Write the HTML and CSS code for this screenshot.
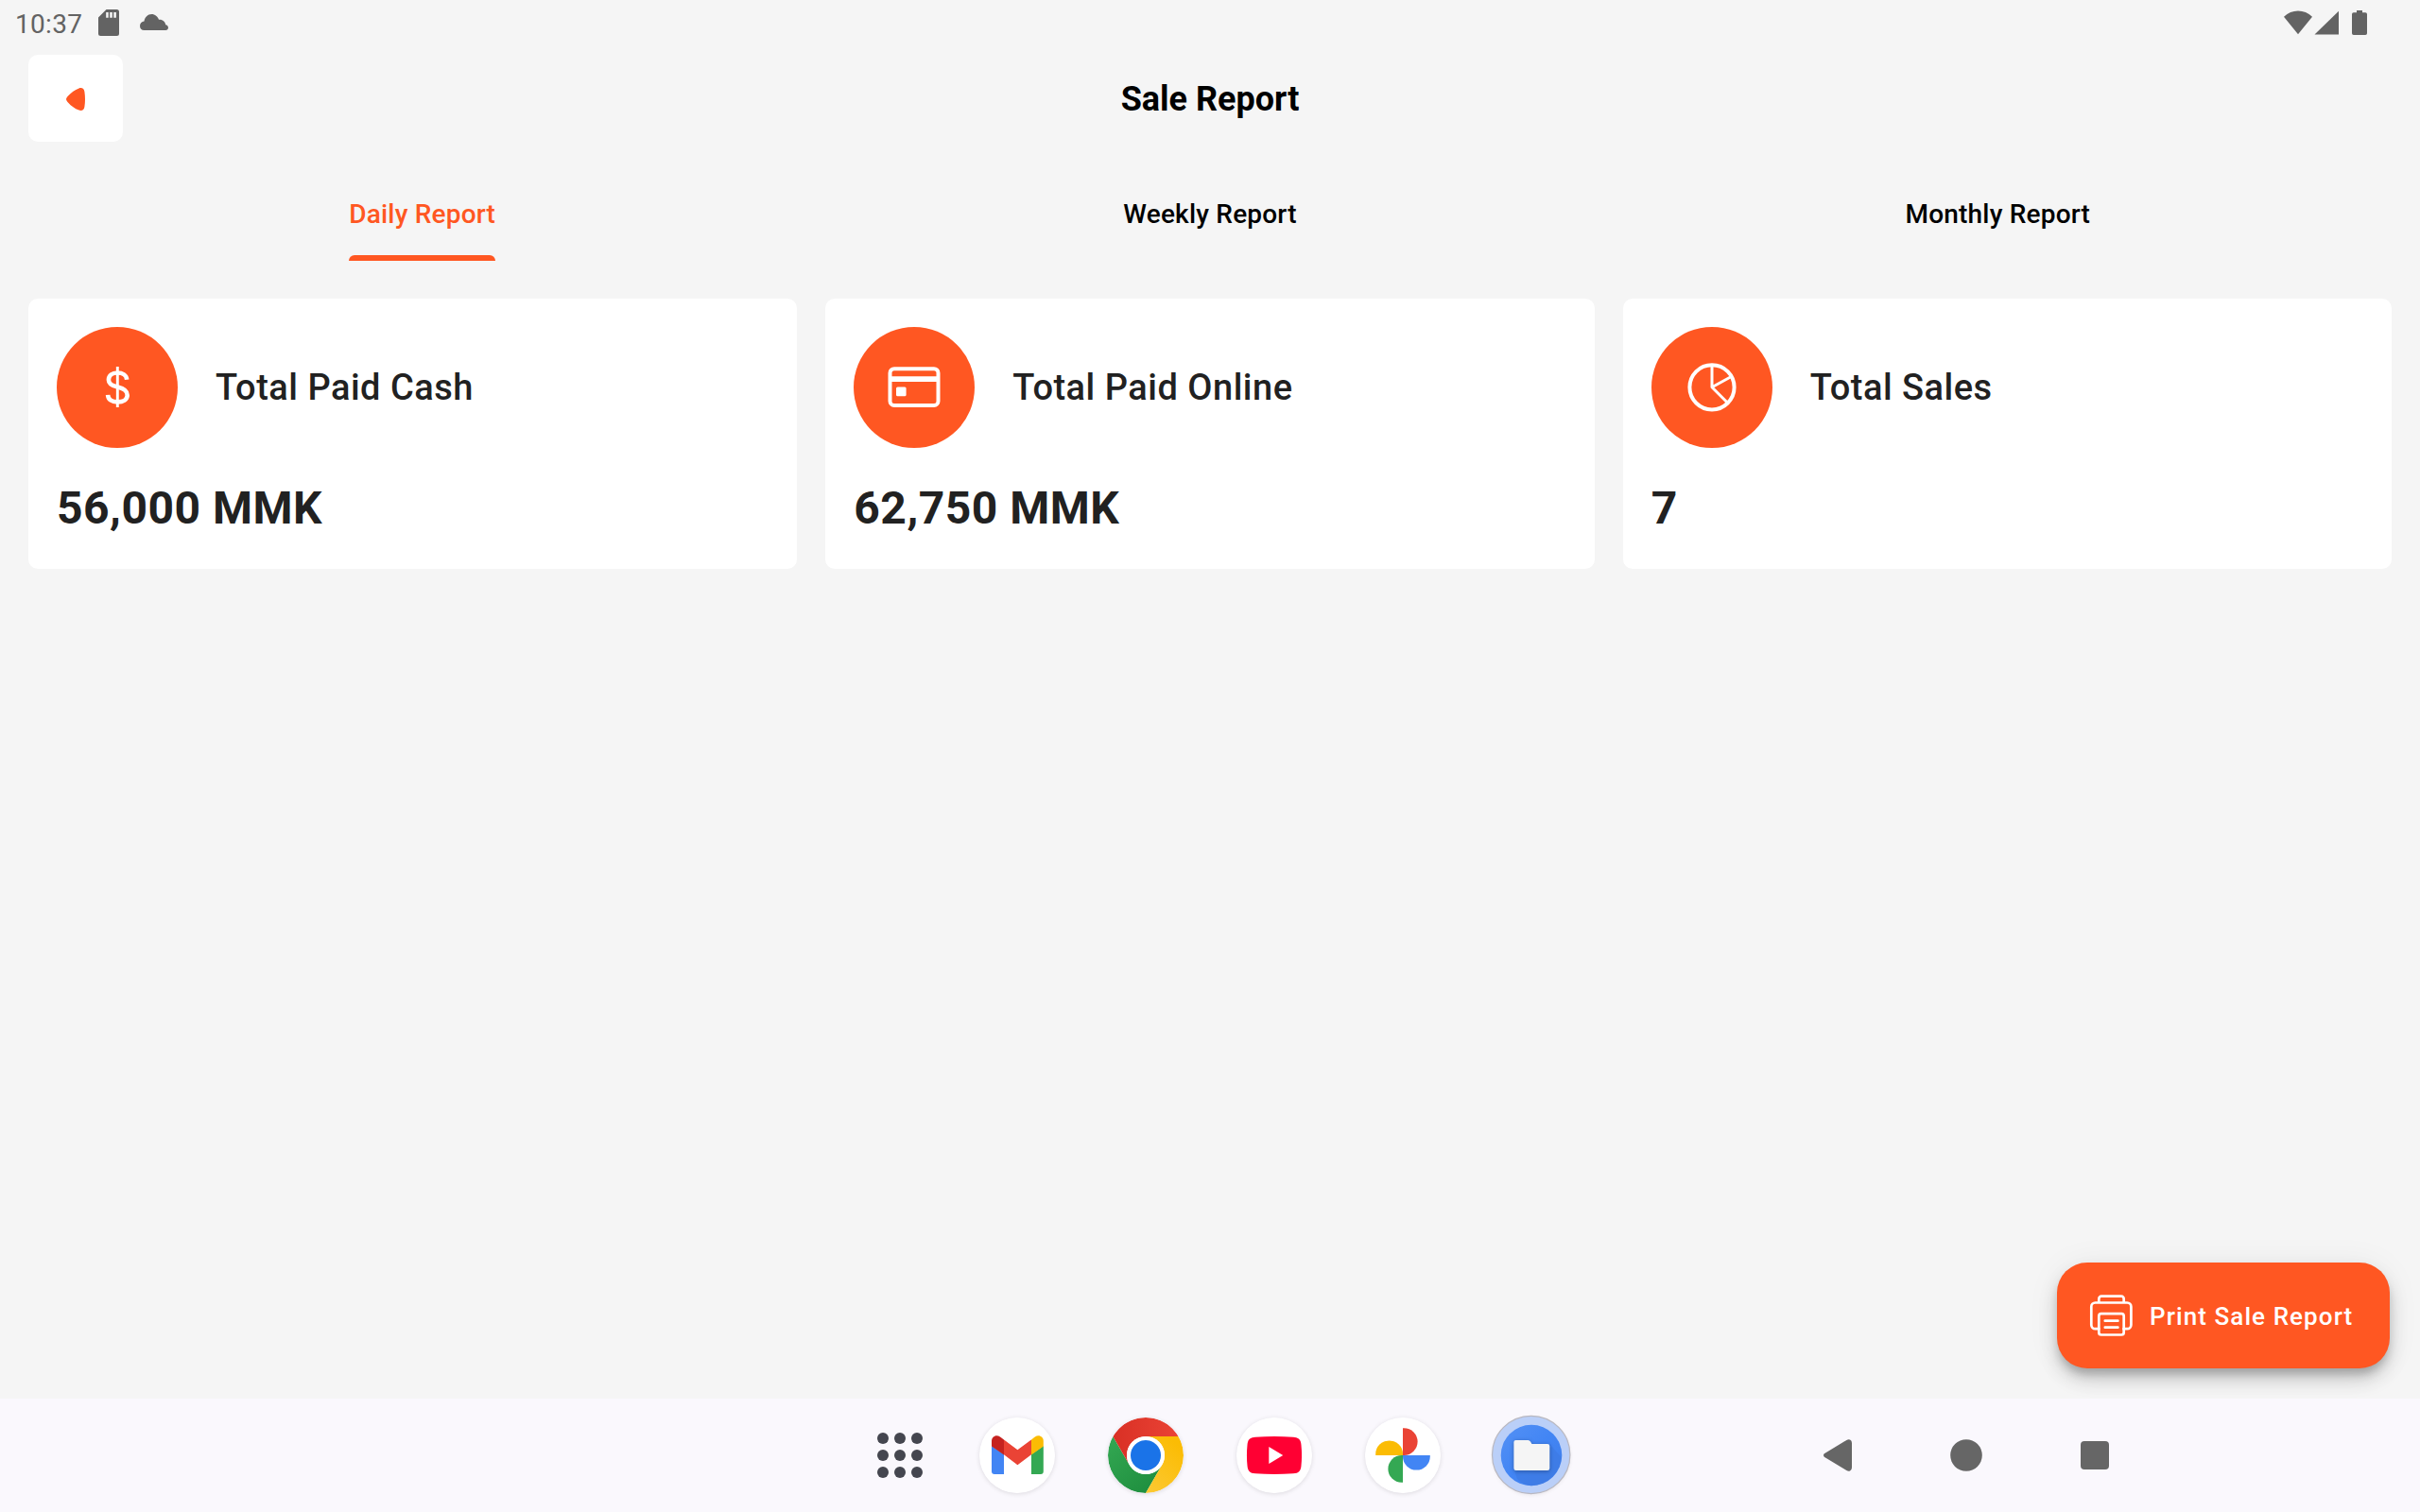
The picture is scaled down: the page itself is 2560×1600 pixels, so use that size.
FILE: index.html
```html
<!DOCTYPE html>
<html lang="en">
<head>
<meta charset="utf-8">
<title>Sale Report</title>
<link rel="stylesheet" href="styles.css">
</head>
<body>
<div class="screen">
  <div class="statusbar">
    <span class="clock">10:37</span>
    <svg class="sd" width="22" height="28" viewBox="0 0 22 28"><path fill="#636363" fill-rule="evenodd" d="M8.5 0H19.5A2.5 2.5 0 0 1 22 2.500V25.500A2.500 2.500 0 0 1 19.500 28H2.500A2.500 2.500 0 0 1 0 25.500V8.500ZM8.200 3V8.700H10.700V3ZM12.200 3V8.700H14.800V3ZM16.300 3V8.700H18.900V3Z"/></svg>
    <svg class="cloud" width="30" height="17" viewBox="0 0 30 17"><path fill="#636363" d="M4.500 17A4.700 4.700 0 0 1 0 12.500C0 9.800 2 7.800 4.500 7.500C5.200 3.200 8.300 0 12.300 0C16 0 18.800 2.500 20 5.700C24 5.300 27 8 27.200 11.200C28.800 11.500 30 12.600 30 14.200C30 15.800 28.800 17 27.200 17Z"/></svg>
    <svg class="signals" width="88" height="26" viewBox="0 0 88 26"><g fill="#636363"><path d="M0 6.800Q6.500 .5 15 .5T30 6.800L15 25.300Z"/><path d="M58 .8V25.500H32.500Z"/><path d="M77 0H83V2.300H86.200Q88 2.300 88 4.100V24.200Q88 26 86.200 26H73.800Q72 26 72 24.200V4.100Q72 2.300 73.800 2.300H77Z"/></g></svg>
  </div>

  <header class="header">
    <button class="back" aria-label="Back"><svg width="20" height="24" viewBox="0 0 20 24"><path fill="#ff5722" d="M2 8.500C5.500 4.500 9 2.200 13.500 .4C16.500-.7 19 .7 19.400 4C20.200 9.500 20.200 14.500 19.400 20C19 23.300 16.500 24.700 13.500 23.600C9 21.800 5.500 19.500 2 15.500C-.6 12.600-.6 11.400 2 8.500Z"/></svg></button>
    <h1 class="title">Sale Report</h1>
    <span class="header-end"></span>
  </header>

  <nav class="tabs">
    <a class="tab tab-active"><span class="tab-label">Daily Report</span></a>
    <a class="tab"><span class="tab-label">Weekly Report</span></a>
    <a class="tab"><span class="tab-label">Monthly Report</span></a>
  </nav>

  <main class="cards">
    <section class="card">
      <div class="card-head">
        <svg class="badge" viewBox="0 0 128 128"><circle cx="64" cy="64" r="64" fill="#ff5722"/><g fill="none" stroke="#fff"><path stroke-width="4.600" d="M74.200 55.700C73.800 51 69.600 48.500 64.300 48.500C58.500 48.500 54.900 51.500 54.900 56C54.900 61 59.500 62.500 64.500 63.600C70.300 65 74.700 67 74.700 72.200C74.700 76.800 70.300 79.400 64.300 79.400C58.200 79.400 54.300 76.700 54.100 71.800"/><path stroke-width="2.900" d="M64.300 42V85"/></g></svg>
        <span class="card-title">Total Paid Cash</span>
      </div>
      <div class="card-value">56,000 MMK</div>
    </section>
    <section class="card">
      <div class="card-head">
        <svg class="badge" viewBox="0 0 128 128"><circle cx="64" cy="64" r="64" fill="#ff5722"/><rect x="38.500" y="44.200" width="51" height="38.800" rx="4.500" fill="none" stroke="#fff" stroke-width="4"/><path fill="#fff" d="M38 52.200H90V58H38Z"/><rect x="45" y="63.500" width="10.600" height="9.700" rx="1.500" fill="#fff"/></svg>
        <span class="card-title">Total Paid Online</span>
      </div>
      <div class="card-value">62,750 MMK</div>
    </section>
    <section class="card">
      <div class="card-head">
        <svg class="badge" viewBox="0 0 128 128"><circle cx="64" cy="64" r="64" fill="#ff5722"/><g fill="none" stroke="#fff"><circle cx="64" cy="63.800" r="23.600" stroke-width="4"/><path stroke-width="3" stroke-linejoin="round" d="M64 41V63.800L80 79.800M64 63.800L84 52.800"/></g></svg>
        <span class="card-title">Total Sales</span>
      </div>
      <div class="card-value">7</div>
    </section>
  </main>

  <button class="fab">
    <svg width="48" height="48" viewBox="0 0 48 48"><g fill="none" stroke="#fff" stroke-width="2.700" stroke-linecap="round" stroke-linejoin="round"><path d="M11.300 38.200H7.500A4.200 4.200 0 0 1 3.300 34V14.700A4.200 4.200 0 0 1 7.500 10.500H41.200A4.200 4.200 0 0 1 45.400 14.700V34A4.200 4.200 0 0 1 41.200 38.200H37.500M11.300 10.500V6.500A2.800 2.800 0 0 1 14.100 3.700H34.900A2.800 2.800 0 0 1 37.700 6.500V10.500"/><rect x="11.300" y="22.200" width="26.400" height="22.300" rx="2.500"/><path d="M17.800 29.700H31.400M17.800 36.700H31.400"/></g></svg>
    <span class="fab-label">Print Sale Report</span>
  </button>

  <footer class="taskbar">
    <svg class="apps" width="48" height="48" viewBox="0 0 48 48"><g fill="#44464f"><circle cx="6" cy="6" r="6"/><circle cx="24" cy="6" r="6"/><circle cx="42" cy="6" r="6"/><circle cx="6" cy="24" r="6"/><circle cx="24" cy="24" r="6"/><circle cx="42" cy="24" r="6"/><circle cx="6" cy="42" r="6"/><circle cx="24" cy="42" r="6"/><circle cx="42" cy="42" r="6"/></g></svg>
    <div class="dock">
      <svg class="app" viewBox="0 0 80 80"><circle cx="40" cy="40" r="40" fill="#fff"/><path fill="#4285f4" d="M13 30L26 39V60H16A3 3 0 0 1 13 57Z"/><path fill="#34a853" d="M67.800 30L55 39V60H64.800A3 3 0 0 0 67.800 57Z"/><path fill="#c5221f" d="M13 30.500V25C13 20 18 17.600 22 20.500L26 23.500V39.500Z"/><path fill="#fbbc04" d="M67.800 30.500V25C67.800 20 62.800 17.600 58.800 20.500L55 23.500V39.500Z"/><path fill="#ea4335" d="M26 23.500L40.400 34.200L55 23.500V39.200L40.400 50.200L26 39.200Z"/></svg>
      <svg class="app" viewBox="0 0 80 80">
        <defs>
          <linearGradient id="cr" x1="0" x2="1"><stop offset="0" stop-color="#d93025"/><stop offset="1" stop-color="#ea4335"/></linearGradient>
          <linearGradient id="cg" x1=".8" y1="1" x2="0" y2="0"><stop offset="0" stop-color="#1e8e3e"/><stop offset="1" stop-color="#34a853"/></linearGradient>
          <linearGradient id="cy" x1="0" y1="1" x2=".6" y2="0"><stop offset="0" stop-color="#fcc934"/><stop offset="1" stop-color="#fbbc04"/></linearGradient>
        </defs>
        <path fill="url(#cg)" d="M5.360 20L22.680 50A20 20 0 0 0 57.320 50L40 80A40 40 0 0 1 5.360 20Z"/><path fill="url(#cy)" d="M74.640 20H40A20 20 0 0 1 57.320 50L40 80A40 40 0 0 0 74.640 20Z"/><path fill="url(#cr)" d="M5.360 20A40 40 0 0 1 74.640 20H40A20 20 0 0 0 22.680 50Z"/><circle cx="40" cy="40" r="20" fill="#fff"/><circle cx="40" cy="40" r="16" fill="#1a73e8"/>
      </svg>
      <svg class="app" viewBox="0 0 80 80"><circle cx="40" cy="40" r="40" fill="#fff"/><path fill="#f03" d="M20 20.700Q40 19.300 60 20.700C66 21 68 23.500 68.500 29Q69.600 40 68.500 51C68 56.500 66 59 60 59.300Q40 60.700 20 59.300C14 59 12 56.500 11.500 51Q10.400 40 11.500 29C12 23.500 14 21 20 20.700Z"/><path fill="#fff" d="M34.300 31V49L49.200 40Z"/></svg>
      <svg class="app" viewBox="0 0 80 80"><circle cx="40" cy="40" r="40" fill="#fff"/><path fill="#ea4335" d="M40 11.200H41.200A14.400 14.400 0 0 1 41.200 40H40Z"/><path fill="#4285f4" d="M68.800 40V41.200A14.400 14.400 0 0 1 40 41.200V40Z"/><path fill="#34a853" d="M40 68.800H38.800A14.400 14.400 0 0 1 38.800 40H40Z"/><path fill="#fbbc04" d="M11.200 40V38.800A14.400 14.400 0 0 1 40 38.800V40Z"/></svg>
      <svg class="app app-files" viewBox="0 0 80 80">
        <defs><linearGradient id="fb" x1="0" y1="0" x2="1" y2="1"><stop offset="0" stop-color="#5491f5"/><stop offset=".5" stop-color="#4285f4"/><stop offset="1" stop-color="#3f7de8"/></linearGradient></defs>
        <circle cx="39.700" cy="39.500" r="41.200" fill="#bacff8" stroke="#b9b8c0" stroke-width="1.200"/><circle cx="40" cy="40" r="32.300" fill="url(#fb)"/><path fill="#3c78e0" opacity=".55" d="M59.300 28L71.500 42A32.300 32.300 0 0 1 40 72.300Q32 72 25 65L22 56H59Z"/><path class="folder" fill="#f5f5f5" d="M23.500 24H36.500Q38 24 39 25.500L40.500 28H57Q59.300 28 59.300 30.300V53.700Q59.300 56 57 56H23.700Q21.400 56 21.400 53.700V26Q21.400 24 23.500 24Z"/></svg>
    </div>
    <div class="sysnav">
      <svg width="48" height="48" viewBox="0 0 48 48"><path fill="#666" d="M9.800 22.300L33.400 7.900Q35.500 6.700 37 7.600Q39 8.600 39 11V37Q39 39.400 37 40.400Q35.500 41.300 33.400 40.100L9.800 25.700Q8.200 24 9.800 22.300Z"/></svg>
      <svg width="48" height="48" viewBox="0 0 48 48"><circle cx="24" cy="24" r="16.800" fill="#666"/></svg>
      <svg width="48" height="48" viewBox="0 0 48 48"><rect x="9" y="9" width="30" height="30" rx="4" fill="#666"/></svg>
    </div>
  </footer>
</div>
</body>
</html>
```
FILE: styles.css
```css
* { box-sizing: border-box; }
body { margin: 0; font-family: Roboto, sans-serif; background: #f5f5f5; }
button { border: 0; padding: 0; font: inherit; }
svg { display: block; flex: none; }

.screen { position: relative; width: 2560px; height: 1600px; display: flex; flex-direction: column; background: #f5f5f5; overflow: hidden; }

.statusbar { height: 48px; padding: 0 56px 0 16px; display: flex; align-items: center; color: #636363; }
.clock { width: 72px; font-size: 28px; line-height: 48px; letter-spacing: .3px; margin-top: 3px; }
.sd { margin-left: 16px; }
.cloud { margin-left: 22px; margin-top: -2px; }
.signals { margin-left: auto; }

.header { height: 112px; padding: 10px 30px; display: flex; align-items: center; justify-content: space-between; }
.back { width: 100px; height: 92px; padding-top: 2px; border-radius: 10px; background: #fff; display: grid; place-items: center; }
.header-end { width: 100px; }
.title { margin: 0; padding-top: 2px; font-size: 36px; font-weight: 700; color: #000; }

.tabs { margin: 40px 30px 0; height: 76px; display: grid; grid-template-columns: repeat(3, 1fr); justify-items: center; }
.tab { display: flex; font-size: 28px; font-weight: 500; line-height: 32px; letter-spacing: .2px; padding-top: 11px; }
.tab-active { color: #ff5722; position: relative; }
.tab-active::after { content: ""; position: absolute; left: 0; right: 0; bottom: 0; height: 6px; background: #ff5722; border-radius: 6px 6px 0 0; }

.cards { padding: 40px 30px 0; display: grid; grid-template-columns: repeat(3, 1fr); gap: 30px; flex: 1; align-content: start; }
.card { height: 286px; padding: 30px; border-radius: 10px; background: #fff; color: #212121; }
.card-head { display: flex; align-items: center; gap: 40px; }
.badge { width: 128px; height: 128px; }
.card-title { font-size: 38px; font-weight: 500; letter-spacing: .5px; }
.card-value { margin-top: 36px; font-size: 48px; font-weight: 700; line-height: 56px; letter-spacing: .5px; }

.fab { position: absolute; right: 32px; bottom: 152px; width: 352px; height: 112px; padding-left: 33px; display: flex; align-items: center; gap: 17px; border-radius: 32px; background: #ff5722; color: #fff; box-shadow: 0 8px 10px -2px rgba(0,0,0,.2), 0 12px 20px rgba(0,0,0,.16), 0 2px 36px rgba(0,0,0,.06); }
.fab-label { padding-top: 1px; font-size: 26px; font-weight: 500; letter-spacing: 1.08px; }

.taskbar { position: relative; height: 120px; padding-left: 928px; display: flex; align-items: center; background: #faf8fd; }
.dock { margin-left: 60px; display: flex; gap: 56px; }
.app { width: 80px; height: 80px; border-radius: 50%; box-shadow: 0 1px 5px rgba(0,0,0,.12); }
.app-files { overflow: visible; }
.folder { filter: drop-shadow(0 1px 2px rgba(0,0,0,.3)); }
.sysnav { margin-left: 260px; display: flex; gap: 88px; }
```
